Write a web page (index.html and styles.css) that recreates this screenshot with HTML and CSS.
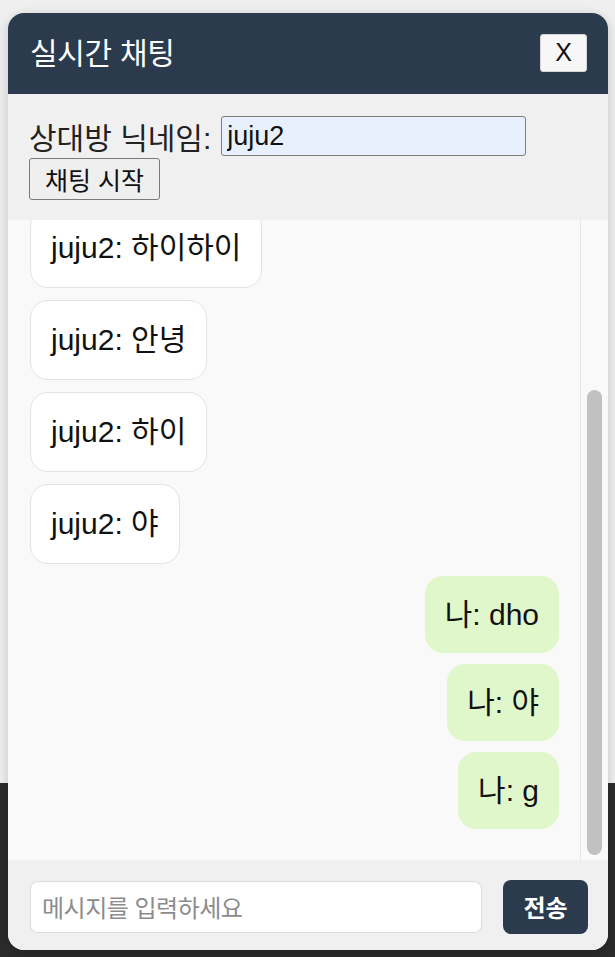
FILE: index.html
```html
<!DOCTYPE html>
<html lang="ko">
<head>
<meta charset="utf-8">
<title>실시간 채팅</title>
<link rel="stylesheet" href="styles.css">
</head>
<body>
<div class="chat">
  <div class="chat-header">
    <span class="chat-title">실시간 채팅</span>
    <button class="close-btn">X</button>
  </div>
  <div class="nick">
    <div class="nick-row">
      <label class="nick-label">상대방 닉네임:</label>
      <input class="nick-input" type="text" value="juju2">
    </div>
    <button class="start-btn">채팅 시작</button>
  </div>
  <div class="messages">
    <div class="viewport">
      <div class="msg-list">
        <div class="msg theirs">juju2: 하이하이</div>
        <div class="msg theirs">juju2: 안녕</div>
        <div class="msg theirs">juju2: 하이</div>
        <div class="msg theirs">juju2: 야</div>
        <div class="msg mine">나: dho</div>
        <div class="msg mine">나: 야</div>
        <div class="msg mine">나: g</div>
      </div>
    </div>
    <div class="scrollbar"><div class="thumb"></div></div>
  </div>
  <div class="composer">
    <input class="composer-input" type="text" placeholder="메시지를 입력하세요">
    <button class="send-btn">전송</button>
  </div>
</div>
</body>
</html>
```

FILE: styles.css
```css
html, body {
  margin: 0;
  padding: 0;
}
body {
  width: 615px;
  height: 957px;
  overflow: hidden;
  background: linear-gradient(#efefef 0, #efefef 783px, #2b2b2b 783px);
  font-family: "Liberation Sans", "Noto Sans CJK KR", sans-serif;
}
.chat {
  margin: 13px 0 0 8px;
  width: 600px;
  height: 937px;
  border-radius: 16px;
  overflow: hidden;
  display: flex;
  flex-direction: column;
  background: #f0f0f0;
  box-shadow: 0 3px 12px rgba(0, 0, 0, 0.18);
}
.chat-header {
  height: 81px;
  flex: none;
  background: #2c3a4e;
  display: flex;
  align-items: center;
  justify-content: space-between;
  padding: 0 21px 0 22px;
}
.chat-title {
  color: #fff;
  font-family: "Noto Sans CJK KR", sans-serif;
  font-size: 30px;
  line-height: 40px;
  letter-spacing: -0.3px;
  margin-top: -6px;
}
.close-btn {
  width: 47px;
  height: 38px;
  margin-top: -2px;
  border: 1px solid #d5d5d5;
  border-radius: 3px;
  background: #f7f7f7;
  color: #111;
  font-family: "Liberation Sans", sans-serif;
  font-size: 25px;
  padding: 0;
}
.nick {
  flex: none;
  height: 126px;
  box-sizing: border-box;
  padding: 22px 22px 0 21px;
  background: #f0f0f0;
}
.nick-row {
  display: flex;
  align-items: center;
  height: 40px;
}
.nick-label {
  font-size: 30px;
  color: #222;
  margin-right: 10px;
}
.nick-input {
  width: 305px;
  height: 40px;
  box-sizing: border-box;
  border: 1px solid #7d7d7d;
  border-radius: 3px;
  background: #e8f0fe;
  font-family: "Liberation Sans", sans-serif;
  font-size: 27px;
  color: #111;
  padding: 0 5px;
}
.start-btn {
  display: block;
  margin-top: 2px;
  width: 131px;
  height: 42px;
  box-sizing: border-box;
  border: 1px solid #7a7a7a;
  border-radius: 3px;
  background: #efefef;
  font-family: "Noto Sans CJK KR", sans-serif;
  font-size: 25px;
  line-height: 1;
  color: #111;
  padding: 0;
}
.messages {
  flex: none;
  height: 640px;
  background: #f9f9f9;
  display: flex;
}
.viewport {
  flex: 1;
  overflow: hidden;
  display: flex;
  flex-direction: column-reverse;
}
.scrollbar {
  flex: none;
  width: 27px;
  border-left: 1px solid #e6e6e6;
  background: #f9f9f9;
}
.thumb {
  margin: 170px 0 0 6px;
  width: 15px;
  height: 465px;
  border-radius: 8px;
  background: #c1c1c1;
}
.msg-list {
  flex: none;
  display: flex;
  flex-direction: column;
  padding: 20px 21px 31px 22px;
}
.msg {
  font-size: 30px;
  line-height: 37px;
  color: #111;
  padding: 20px 20px;
  border-radius: 18px;
  max-width: 70%;
  white-space: nowrap;
}
.msg + .msg {
  margin-top: 12px;
}
.theirs {
  align-self: flex-start;
  background: #fff;
  border: 1px solid #e3e3e3;
  padding: 20px 20px 21px;
}
.mine {
  align-self: flex-end;
  background: #dff7cb;
}
.mine + .mine {
  margin-top: 11px;
}
.composer {
  flex: 1;
  display: flex;
  align-items: center;
  gap: 21px;
  padding: 3px 20px 0 22px;
  background: #f0f0f0;
}
.composer-input {
  width: 452px;
  height: 52px;
  box-sizing: border-box;
  border: 1px solid #dcdcdc;
  border-radius: 8px;
  background: #fff;
  padding: 0 11px;
  font-family: "Noto Sans CJK KR", sans-serif;
  font-size: 24px;
  letter-spacing: -0.5px;
}
.composer-input::placeholder {
  color: #8c8c8c;
}
.send-btn {
  width: 85px;
  height: 54px;
  border: none;
  border-radius: 8px;
  background: #2c3a4e;
  color: #fff;
  font-family: "Noto Sans CJK KR", sans-serif;
  font-size: 24px;
  font-weight: 600;
  padding: 0;
}
```
